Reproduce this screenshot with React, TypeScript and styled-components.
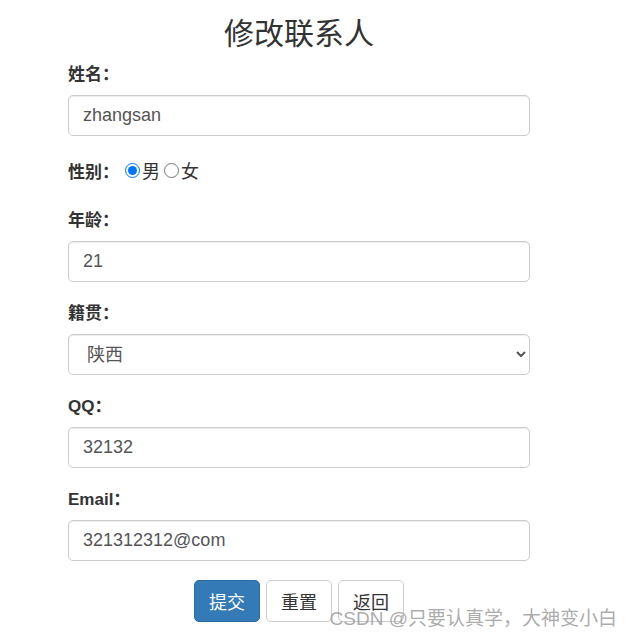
import React, { useState } from 'react';
import styled, { createGlobalStyle } from 'styled-components';

const GlobalStyle = createGlobalStyle`
  html, body {
    margin: 0;
    padding: 0;
    background: #fff;
  }
  body {
    font-family: "Liberation Sans", Arial, "Noto Sans CJK SC", sans-serif;
    color: #333;
  }
`;

const Page = styled.div`
  position: relative;
  width: 631px;
  height: 638px;
  overflow: hidden;
`;

const Container = styled.form`
  margin-left: 68px;
  width: 462px;
`;

const Title = styled.h3`
  margin: 17px 0 13px;
  font-size: 30px;
  line-height: 33px;
  font-weight: 400;
  text-align: center;
  color: #333;
`;

const Group = styled.div<{ $mb?: number }>`
  margin-bottom: ${(p) => (p.$mb ?? 20)}px;
`;

const Label = styled.label`
  display: block;
  margin-bottom: 8px;
  font-size: 17px;
  line-height: 24px;
  font-weight: 700;
  color: #333;
`;

const InlineRow = styled.div`
  display: flex;
  align-items: center;
  height: 28px;
  font-size: 17px;
`;

const InlineLabel = styled.span`
  font-weight: 700;
  color: #333;
  margin-right: 6px;
`;

const RadioOption = styled.label`
  display: inline-flex;
  align-items: center;
  font-size: 18px;
  color: #333;
  margin-right: 4px;
`;

const Radio = styled.input`
  width: 15px;
  height: 15px;
  margin: 0 2px 0 0;
  accent-color: #0075ff;
`;

const fieldCss = `
  display: block;
  box-sizing: border-box;
  width: 100%;
  height: 41px;
  padding: 7px 14px;
  font-family: "Liberation Sans", Arial, "Noto Sans CJK SC", sans-serif;
  font-size: 18px;
  line-height: 25px;
  color: #555;
  background: #fff;
  border: 1px solid #ccc;
  border-radius: 5px;
  box-shadow: inset 0 1px 1px rgba(0, 0, 0, 0.075);
  outline: none;
`;

const TextInput = styled.input`
  ${fieldCss}
`;

const Select = styled.select`
  ${fieldCss}
  padding-left: 14px;
`;

const Actions = styled.div`
  display: flex;
  justify-content: center;
  gap: 6px;
  margin-top: 19px;
`;

const Button = styled.button<{ $primary?: boolean }>`
  box-sizing: border-box;
  height: 42px;
  padding: 0 14px;
  font-family: "Noto Sans CJK SC", "Liberation Sans", sans-serif;
  font-size: 18px;
  line-height: 40px;
  border-radius: 5px;
  cursor: pointer;
  color: ${(p) => (p.$primary ? '#fff' : '#333')};
  background: ${(p) => (p.$primary ? '#337ab7' : '#fff')};
  border: 1px solid ${(p) => (p.$primary ? '#2e6da4' : '#ccc')};
`;

const Watermark = styled.div`
  position: absolute;
  right: 14px;
  bottom: 8px;
  font-size: 19px;
  line-height: 22px;
  color: rgba(150, 150, 150, 0.8);
  white-space: nowrap;
  pointer-events: none;
`;

export default function App() {
  const [gender, setGender] = useState('男');

  return (
    <Page>
      <GlobalStyle />
      <Container onSubmit={(e) => e.preventDefault()}>
        <Title>修改联系人</Title>

        <Group>
          <Label htmlFor="name">姓名：</Label>
          <TextInput id="name" defaultValue="zhangsan" />
        </Group>

        <Group $mb={25}>
          <InlineRow>
            <InlineLabel>性别：</InlineLabel>
            <RadioOption>
              <Radio type="radio" name="gender" checked={gender === '男'} onChange={() => setGender('男')} />
              男
            </RadioOption>
            <RadioOption>
              <Radio type="radio" name="gender" checked={gender === '女'} onChange={() => setGender('女')} />
              女
            </RadioOption>
          </InlineRow>
        </Group>

        <Group>
          <Label htmlFor="age">年龄：</Label>
          <TextInput id="age" defaultValue="21" />
        </Group>

        <Group>
          <Label htmlFor="address">籍贯：</Label>
          <Select id="address" defaultValue="陕西">
            <option value="陕西">陕西</option>
            <option value="北京">北京</option>
            <option value="上海">上海</option>
          </Select>
        </Group>

        <Group>
          <Label htmlFor="qq">QQ：</Label>
          <TextInput id="qq" defaultValue="32132" />
        </Group>

        <Group $mb={0}>
          <Label htmlFor="email">Email：</Label>
          <TextInput id="email" defaultValue="321312312@com" />
        </Group>

        <Actions>
          <Button $primary type="submit">提交</Button>
          <Button type="reset">重置</Button>
          <Button type="button">返回</Button>
        </Actions>
      </Container>
      <Watermark>CSDN @只要认真学，大神变小白</Watermark>
    </Page>
  );
}
